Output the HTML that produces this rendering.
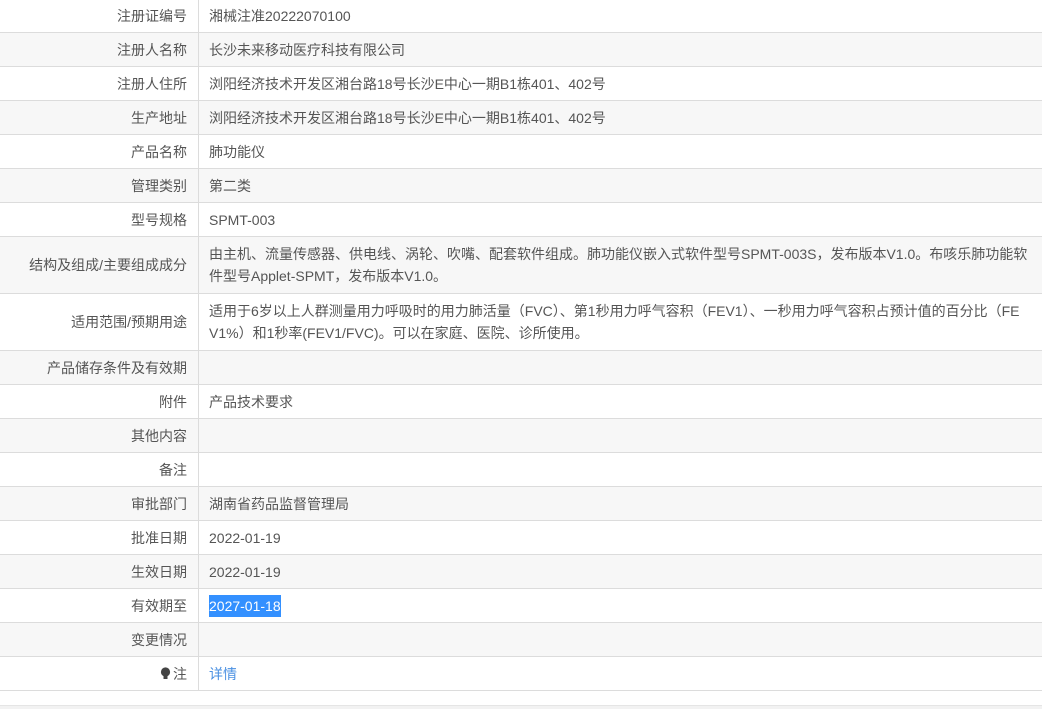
<!DOCTYPE html>
<html><head><meta charset="utf-8"><style>
html,body{margin:0;padding:0;background:#fff;width:1042px;height:708px;overflow:hidden}
body{font-family:"Liberation Sans","Noto Sans CJK SC",sans-serif;font-size:14px;color:#555}
.wrap{position:absolute;top:-1px;left:0;width:1042px}
.row{display:flex;border-bottom:1px solid #dcdcdc;height:33px}
.row.g{background:#f7f7f7}
.row.t{height:56px}
.l{width:187px;padding-right:11px;border-right:1px solid #dcdcdc;text-align:right;display:flex;align-items:center;justify-content:flex-end;color:#555;white-space:nowrap}
.v{padding-left:10px;display:flex;align-items:center;white-space:nowrap;line-height:22px;color:#555}
.sel{background:#3390ff;color:#fff}
a{color:#4a90e2;text-decoration:none}
.bot{position:absolute;top:705px;left:0;width:1042px;height:3px;background:#f2f2f2;border-top:1px solid #e5e5e5}
</style></head><body>
<div class="wrap">
<div class="row"><div class="l">注册证编号</div><div class="v">湘械注准20222070100</div></div>
<div class="row g"><div class="l">注册人名称</div><div class="v">长沙未来移动医疗科技有限公司</div></div>
<div class="row"><div class="l">注册人住所</div><div class="v">浏阳经济技术开发区湘台路18号长沙E中心一期B1栋401、402号</div></div>
<div class="row g"><div class="l">生产地址</div><div class="v">浏阳经济技术开发区湘台路18号长沙E中心一期B1栋401、402号</div></div>
<div class="row"><div class="l">产品名称</div><div class="v">肺功能仪</div></div>
<div class="row g"><div class="l">管理类别</div><div class="v">第二类</div></div>
<div class="row"><div class="l">型号规格</div><div class="v">SPMT-003</div></div>
<div class="row g t"><div class="l">结构及组成/主要组成成分</div><div class="v">由主机、流量传感器、供电线、涡轮、吹嘴、配套软件组成。肺功能仪嵌入式软件型号SPMT-003S，发布版本V1.0。布咳乐肺功能软<br>件型号Applet-SPMT，发布版本V1.0。</div></div>
<div class="row t"><div class="l">适用范围/预期用途</div><div class="v">适用于6岁以上人群测量用力呼吸时的用力肺活量（FVC）、第1秒用力呼气容积（FEV1）、一秒用力呼气容积占预计值的百分比（FE<br>V1%）和1秒率(FEV1/FVC)。可以在家庭、医院、诊所使用。</div></div>
<div class="row g"><div class="l">产品储存条件及有效期</div><div class="v"></div></div>
<div class="row"><div class="l">附件</div><div class="v">产品技术要求</div></div>
<div class="row g"><div class="l">其他内容</div><div class="v"></div></div>
<div class="row"><div class="l">备注</div><div class="v"></div></div>
<div class="row g"><div class="l">审批部门</div><div class="v">湖南省药品监督管理局</div></div>
<div class="row"><div class="l">批准日期</div><div class="v">2022-01-19</div></div>
<div class="row g"><div class="l">生效日期</div><div class="v">2022-01-19</div></div>
<div class="row"><div class="l">有效期至</div><div class="v"><span class="sel">2027-01-18</span></div></div>
<div class="row g"><div class="l">变更情况</div><div class="v"></div></div>
<div class="row"><div class="l"><svg width="11" height="13" viewBox="0 0 11 13" style="margin-right:2px"><circle cx="5.5" cy="5" r="4.6" fill="#444"/><rect x="3.5" y="9" width="4" height="3" fill="#444"/></svg>注</div><div class="v"><a>详情</a></div></div>
</div>
<div class="bot"></div>
</body></html>
